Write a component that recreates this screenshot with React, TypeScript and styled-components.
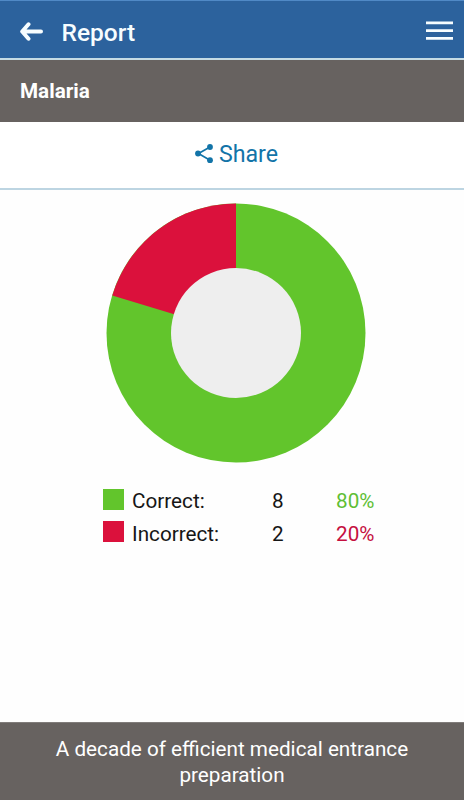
import React from "react";
import styled, { createGlobalStyle } from "styled-components";

const GlobalStyle = createGlobalStyle`
  * { box-sizing: border-box; }
  body { margin: 0; background: #fff; font-family: Roboto, "Liberation Sans", sans-serif; }
`;

const Screen = styled.div`
  display: flex;
  flex-direction: column;
  height: 800px;
  background: #fefefe;
  color: #161616;
`;

const AppBar = styled.header`
  display: flex;
  align-items: center;
  height: 60px;
  flex: none;
  padding: 5px 11px 0 20px;
  background: #2c629d;
  border-top: 1px solid #5089c6;
  border-bottom: 2px solid #c5dbe4;
  color: #f7fdff;
`;

const Title = styled.h1`
  flex: 1;
  margin: 1px 0 0 17.5px;
  font-size: 24.5px;
  line-height: 28px;
  font-weight: 500;
`;

const IconButton = styled.button`
  display: flex;
  padding: 0;
  border: 0;
  background: none;
  color: inherit;
`;

const Subject = styled.h2`
  flex: none;
  height: 62px;
  margin: 0;
  padding-left: 20px;
  background: #676260;
  color: #fff;
  font-size: 20.7px;
  line-height: 63px;
  font-weight: 700;
`;

const ShareBar = styled.button`
  display: flex;
  justify-content: center;
  align-items: center;
  gap: 5px;
  flex: none;
  height: 68px;
  padding: 0 0 2px 9px;
  border: 0;
  border-bottom: 2px solid #bdd5e2;
  background: #fff;
  color: #1274a8;
  font: 400 23.2px/28px Roboto, sans-serif;
`;

const Results = styled.main`
  flex: 1;
  padding-top: 13px;
`;

const Donut = styled.svg`
  display: block;
  margin: 0 auto 22px 106px;
`;

const Legend = styled.div`
  display: grid;
  grid-template-columns: 29.5px 140px 64px auto;
  grid-auto-rows: 32.5px;
  align-items: center;
  margin-left: 102.5px;
  font-size: 20.7px;
`;

const Swatch = styled.span<{ $color: string }>`
  width: 21px;
  height: 21px;
  margin-top: -4px;
  background: ${(p) => p.$color};
`;

const Percent = styled.span<{ $color: string }>`
  color: ${(p) => p.$color};
`;

const Footer = styled.footer`
  flex: none;
  height: 78px;
  padding: 13px 50px 0;
  border-top: 1px solid #807c7a;
  background: #676260;
  color: #fff;
  font-size: 20.7px;
  line-height: 26px;
  text-align: center;
`;

const rows = [
  { label: "Correct:", count: 8, percent: "80%", color: "#62c52c", text: "#5fbe35" },
  { label: "Incorrect:", count: 2, percent: "20%", color: "#db113c", text: "#c5103f" },
];

export default function App() {
  return (
    <Screen>
      <GlobalStyle />
      <AppBar>
        <IconButton aria-label="Back">
          <svg width="24" height="20" viewBox="0 0 24 20" fill="none" stroke="currentColor" strokeWidth="4" strokeLinecap="round" strokeLinejoin="round">
            <path d="M8.500 2.300 2.200 9.500l6.300 7.200M3 9.500h18" />
          </svg>
        </IconButton>
        <Title>Report</Title>
        <IconButton aria-label="Menu">
          <svg width="27" height="22" viewBox="0 0 27 22" fill="currentColor">
            <path d="M0 .5h27v2.700H0zM0 8.300h27V11H0zM0 16h27v2.700H0z" />
          </svg>
        </IconButton>
      </AppBar>
      <Subject>Malaria</Subject>
      <ShareBar>
        <svg width="19" height="20" viewBox="0 0 19 20" fill="currentColor">
          <path d="M15 3 3.500 9.500l11.500 6.700" fill="none" stroke="currentColor" strokeWidth="1.700" />
          <circle cx="3" cy="9.500" r="2.900" />
          <circle cx="15" cy="3" r="2.900" />
          <circle cx="15" cy="16.200" r="2.900" />
        </svg>
        Share
      </ShareBar>
      <Results>
        <Donut width="260" height="260" viewBox="0 0 260 260">
          <circle cx="130" cy="130" r="129.500" fill="#62c52c" />
          <path d="M130 130V.5A129.500 129.500 0 0 0 6.300 92.500Z" fill="#db113c" />
          <circle cx="130" cy="130" r="65" fill="#eee" />
        </Donut>
        <Legend>
          {rows.map((r) => (
            <React.Fragment key={r.label}>
              <Swatch $color={r.color} />
              <span>{r.label}</span>
              <span>{r.count}</span>
              <Percent $color={r.text}>{r.percent}</Percent>
            </React.Fragment>
          ))}
        </Legend>
      </Results>
      <Footer>A decade of efficient medical entrance preparation</Footer>
    </Screen>
  );
}
